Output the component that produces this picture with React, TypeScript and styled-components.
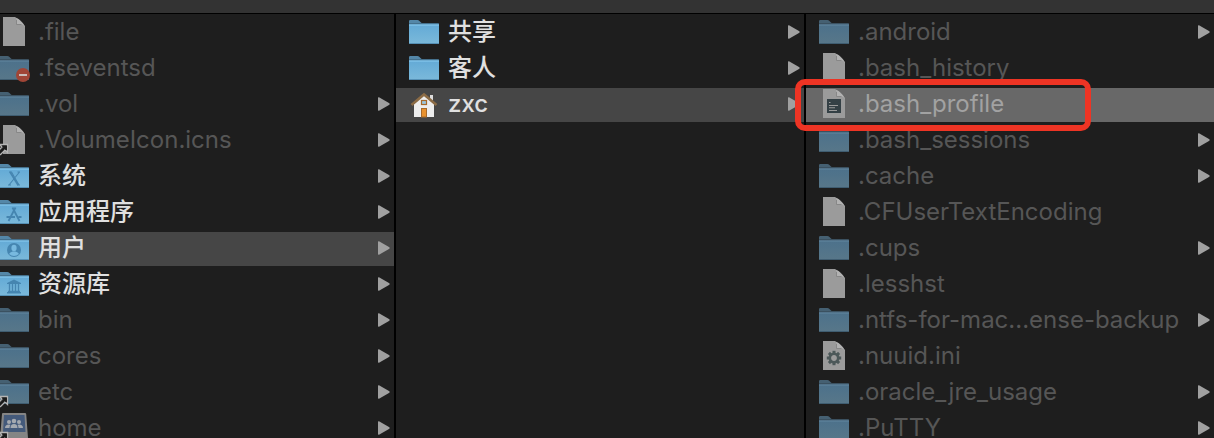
import React from 'react';
import styled, { createGlobalStyle } from 'styled-components';

const GlobalStyle = createGlobalStyle`
  *, *::before, *::after { box-sizing: border-box; }
  body {
    margin: 0;
    background: #1e1e1e;
    font-family: Inter, "Noto Sans CJK SC", sans-serif;
  }
`;

const Finder = styled.main`
  display: flex;
  flex-direction: column;
  height: 100vh;
  overflow: hidden;
`;

const Toolbar = styled.header`
  flex: none;
  height: 14px;
  background: #333;
  border-bottom: 1px solid #000;
`;

const Browser = styled.div`
  flex: 1;
  min-height: 0;
  display: grid;
  grid-template-columns: repeat(3, minmax(0, 1fr));
  gap: 2px;
  margin-left: -14px;
  background: #000;
`;

const Column = styled.ul`
  display: flex;
  flex-direction: column;
  gap: 2px;
  min-width: 0;
  margin: 0;
  padding: 2px 0 0;
  list-style: none;
  background: #1e1e1e;
`;

type Tone = 'none' | 'path' | 'active';
const rowColors: Record<Tone, string> = { none: 'transparent', path: '#464646', active: '#686868' };

const Item = styled.li`
  position: relative;
`;

const RowButton = styled.button<{ $tone: Tone; $dim: boolean }>`
  display: flex;
  align-items: center;
  gap: 9px;
  width: 100%;
  height: 34px;
  padding: 0 4px 0 13px;
  border: 0;
  background: ${(p) => rowColors[p.$tone]};
  color: ${(p) => (p.$tone === 'active' ? '#a2a2a2' : p.$dim ? '#565656' : '#e0e0e0')};
  font-family: inherit;
  font-size: 24px;
  font-weight: ${(p) => (p.$dim ? 400 : 500)};
  line-height: 30px;
  text-align: left;
`;

const Name = styled.span`
  flex: 1;
  min-width: 0;
  padding-bottom: 3px;
  white-space: nowrap;
`;

const Glyph = styled.svg`
  flex: none;
  width: 30px;
  height: 34px;
  overflow: visible;
`;

const Arrow = styled.svg`
  flex: none;
  width: 12px;
  height: 14px;
  margin-bottom: 2px;
`;

const Marker = styled.div`
  position: absolute;
  z-index: 1;
  top: -9px;
  bottom: -9px;
  left: -11px;
  width: 296px;
  border: 6px solid #ee3424;
  border-radius: 10px;
  pointer-events: none;
`;

type Kind =
  | 'folder' | 'blocked' | 'folderAlias' | 'file' | 'fileAlias' | 'system'
  | 'apps' | 'users' | 'library' | 'home' | 'network' | 'script' | 'config';

const AliasBadge = () => (
  <g>
    <path d="M0.500 20.500H8.500V28.500L6 26L1.500 30.500H-1V27L3 23Z" fill="#262626" stroke="#b4b4b4" strokeWidth="1.300" />
    <path d="M3.500 22.500H7V26M7 22.500L0 29.500" fill="none" stroke="#1a1a1a" strokeWidth="1.600" />
  </g>
);

const Folder = ({ dim, children }: { dim: boolean; children?: React.ReactNode }) => (
  <>
    <path d="M0 27V5.200Q0 4 1.200 4H8.500Q9.500 4 10.200 4.800L12 6.500Q12.500 7 13.500 7H29Q30 7 30 8V27Z" fill={dim ? '#456072' : '#5487a8'} />
    <path d="M0 8H30" stroke={dim ? '#32434e' : '#365a72'} strokeWidth="1" />
    <path d="M0 8.500H30V27Q30 28 29 28H1Q0 28 0 27Z" fill={dim ? 'url(#folder-dim)' : 'url(#folder-lit)'} />
    <path d="M0 9H30" stroke={dim ? '#6387a0' : '#8bcdf2'} strokeWidth="1" />
    <path d="M0.500 27.500H29.500" stroke={dim ? '#3f5d71' : '#5590b5'} strokeWidth="1" />
    {children}
  </>
);

const Page = ({ children }: { children?: React.ReactNode }) => (
  <>
    <path d="M4 1H16L26 10V30H4Z" fill="#9b9b9b" />
    <path d="M15 1C18.500 1.500 17.500 5 17.500 8.500C21 8 25 8.500 26 11C25 7 19 1.500 15 1Z" fill="#b2b2b2" />
    <path d="M17.500 4V8.500H22.500" fill="none" stroke="#808080" strokeWidth="0.800" />
    {children}
  </>
);

const gearTeeth = [0, 45, 90, 135, 180, 225, 270, 315];

const FileGlyph = ({ kind, dim }: { kind: Kind; dim: boolean }) => {
  switch (kind) {
    case 'file':
      return <Page />;
    case 'fileAlias':
      return <Page><AliasBadge /></Page>;
    case 'script':
      return (
        <Page>
          <rect x="8" y="11" width="14" height="14" fill="#344045" />
          <path d="M10 14.500H11.500M10 17.500H19M10 19.800H16M10 22.500H18" stroke="#9b9b9b" strokeWidth="1.100" />
        </Page>
      );
    case 'config':
      return (
        <Page>
          <g fill="#4c5859">
            {gearTeeth.map((a) => (
              <rect key={a} x="13.500" y="10.800" width="3" height="4" transform={`rotate(${a} 15 18)`} />
            ))}
          </g>
          <circle cx="15" cy="18" r="4.200" fill="none" stroke="#4c5859" strokeWidth="2.600" />
        </Page>
      );
    case 'blocked':
      return (
        <Folder dim={dim}>
          <circle cx="24" cy="23" r="7" fill="#a04536" />
          <rect x="20" y="22" width="8" height="2" fill="#c9bcb9" />
        </Folder>
      );
    case 'folderAlias':
      return <Folder dim={dim}><AliasBadge /></Folder>;
    case 'system':
      return (
        <Folder dim={dim}>
          <path d="M10 12H12.500L20 25M20.500 12L10 25M9 25H12M18 25H21M18.500 12H21" fill="none" stroke="#4585b0" strokeWidth="1.100" />
          <path d="M11 12L19 25" stroke="#4585b0" strokeWidth="1.700" />
        </Folder>
      );
    case 'apps':
      return (
        <Folder dim={dim}>
          <path d="M13.500 11.500L20.500 25M16.500 11.500L9.500 25M7.500 21H16M19.500 21H22.500" fill="none" stroke="#4585b0" strokeWidth="1.800" />
        </Folder>
      );
    case 'users':
      return (
        <Folder dim={dim}>
          <circle cx="15" cy="18" r="7" fill="#4585b0" />
          <ellipse cx="15" cy="16" rx="2.600" ry="3.300" fill="#78b9df" />
          <path d="M10 22Q11 20 13.500 19.500H16.500Q19 20 20 22Q15 26 10 22Z" fill="#78b9df" />
        </Folder>
      );
    case 'library':
      return (
        <Folder dim={dim}>
          <path d="M8 15L15 11.500L22 15V16H8ZM8 24H22V25.500H8Z" fill="#4585b0" />
          <path d="M10.500 16V24M13.500 16V24M16.500 16V24M19.500 16V24M9 23.500H21" stroke="#4585b0" strokeWidth="1.300" />
        </Folder>
      );
    case 'home':
      return (
        <>
          <rect x="21" y="7" width="3" height="8" fill="#ddd" />
          <path d="M5 16L15 6L25 16V29H5Z" fill="#ededed" />
          <path d="M2.500 17L15 6.500L27.500 17" fill="none" stroke="#8b6b45" strokeWidth="2.600" />
          <rect x="12.500" y="12.500" width="5" height="4" fill="#9bc7df" stroke="#a76a2b" strokeWidth="1.200" />
          <rect x="12.500" y="20.500" width="5" height="8.500" fill="#e8912e" stroke="#a76a2b" strokeWidth="1" />
        </>
      );
    case 'network':
      return (
        <>
          <path d="M4 1H26Q27 1 27.200 2L29 26V31H1V26L3 2Q3 1 4 1Z" fill="#858585" />
          <path d="M5 3H25.500L26.500 20H4Z" fill="#445a7b" />
          <g fill="#a4a9b0">
            <circle cx="10" cy="10" r="2" /><circle cx="20" cy="10" r="2" /><circle cx="15" cy="9" r="2.300" />
            <path d="M6 16Q6 12.500 10 12.500Q11 12.500 11.500 13Q10.500 14 10.500 16ZM11.500 16Q11.500 12 15 12Q18.500 12 18.500 16ZM19.500 16Q19.500 14 18.500 13Q19 12.500 20 12.500Q24 12.500 24 16Z" />
          </g>
          <AliasBadge />
        </>
      );
    default:
      return <Folder dim={dim} />;
  }
};

interface Entry {
  name: string;
  kind: Kind;
  dim?: boolean;
  arrow?: boolean;
  tone?: Tone;
  marked?: boolean;
}

const columns: { label: string; entries: Entry[] }[] = [
  {
    label: '/',
    entries: [
      { name: '.file', kind: 'file', dim: true },
      { name: '.fseventsd', kind: 'blocked', dim: true },
      { name: '.vol', kind: 'folder', dim: true, arrow: true },
      { name: '.VolumeIcon.icns', kind: 'fileAlias', dim: true, arrow: true },
      { name: '系统', kind: 'system', arrow: true },
      { name: '应用程序', kind: 'apps', arrow: true },
      { name: '用户', kind: 'users', arrow: true, tone: 'path' },
      { name: '资源库', kind: 'library', arrow: true },
      { name: 'bin', kind: 'folder', dim: true, arrow: true },
      { name: 'cores', kind: 'folder', dim: true, arrow: true },
      { name: 'etc', kind: 'folderAlias', dim: true, arrow: true },
      { name: 'home', kind: 'network', dim: true, arrow: true },
    ],
  },
  {
    label: '用户',
    entries: [
      { name: '共享', kind: 'folder', arrow: true },
      { name: '客人', kind: 'folder', arrow: true },
      { name: 'zxc', kind: 'home', arrow: true, tone: 'path' },
    ],
  },
  {
    label: 'zxc',
    entries: [
      { name: '.android', kind: 'folder', dim: true, arrow: true },
      { name: '.bash_history', kind: 'file', dim: true },
      { name: '.bash_profile', kind: 'script', dim: true, tone: 'active', marked: true },
      { name: '.bash_sessions', kind: 'folder', dim: true, arrow: true },
      { name: '.cache', kind: 'folder', dim: true, arrow: true },
      { name: '.CFUserTextEncoding', kind: 'file', dim: true },
      { name: '.cups', kind: 'folder', dim: true, arrow: true },
      { name: '.lesshst', kind: 'file', dim: true },
      { name: '.ntfs-for-mac...ense-backup', kind: 'folder', dim: true, arrow: true },
      { name: '.nuuid.ini', kind: 'config', dim: true },
      { name: '.oracle_jre_usage', kind: 'folder', dim: true, arrow: true },
      { name: '.PuTTY', kind: 'folder', dim: true, arrow: true },
    ],
  },
];

const GradientDefs = styled.svg`
  display: block;
  flex: none;
  width: 0;
  height: 0;
`;

const FolderGradients = () => (
  <GradientDefs aria-hidden="true">
    <defs>
      <linearGradient id="folder-lit" x1="0" y1="0" x2="0" y2="1">
        <stop offset="0" stopColor="#63aad6" />
        <stop offset="1" stopColor="#7bb9da" />
      </linearGradient>
      <linearGradient id="folder-dim" x1="0" y1="0" x2="0" y2="1">
        <stop offset="0" stopColor="#4c718b" />
        <stop offset="1" stopColor="#587789" />
      </linearGradient>
    </defs>
  </GradientDefs>
);

export default function App() {
  return (
    <Finder>
      <GlobalStyle />
      <FolderGradients />
      <Toolbar />
      <Browser>
        {columns.map((column) => (
          <Column key={column.label} aria-label={column.label}>
            {column.entries.map(({ name, kind, dim = false, arrow, tone = 'none', marked }) => (
              <Item key={name}>
                <RowButton type="button" $tone={tone} $dim={dim}>
                  <Glyph viewBox="0 0 30 34" aria-hidden="true">
                    <FileGlyph kind={kind} dim={dim} />
                  </Glyph>
                  <Name>{name}</Name>
                  {arrow && (
                    <Arrow viewBox="0 0 12 14" aria-hidden="true">
                      <path d="M0 1Q0 0 1 0.300L11.400 6.300Q12 7 11.400 7.700L1 13.700Q0 14 0 13Z" fill="#a0a0a0" />
                    </Arrow>
                  )}
                </RowButton>
                {marked && <Marker />}
              </Item>
            ))}
          </Column>
        ))}
      </Browser>
    </Finder>
  );
}
